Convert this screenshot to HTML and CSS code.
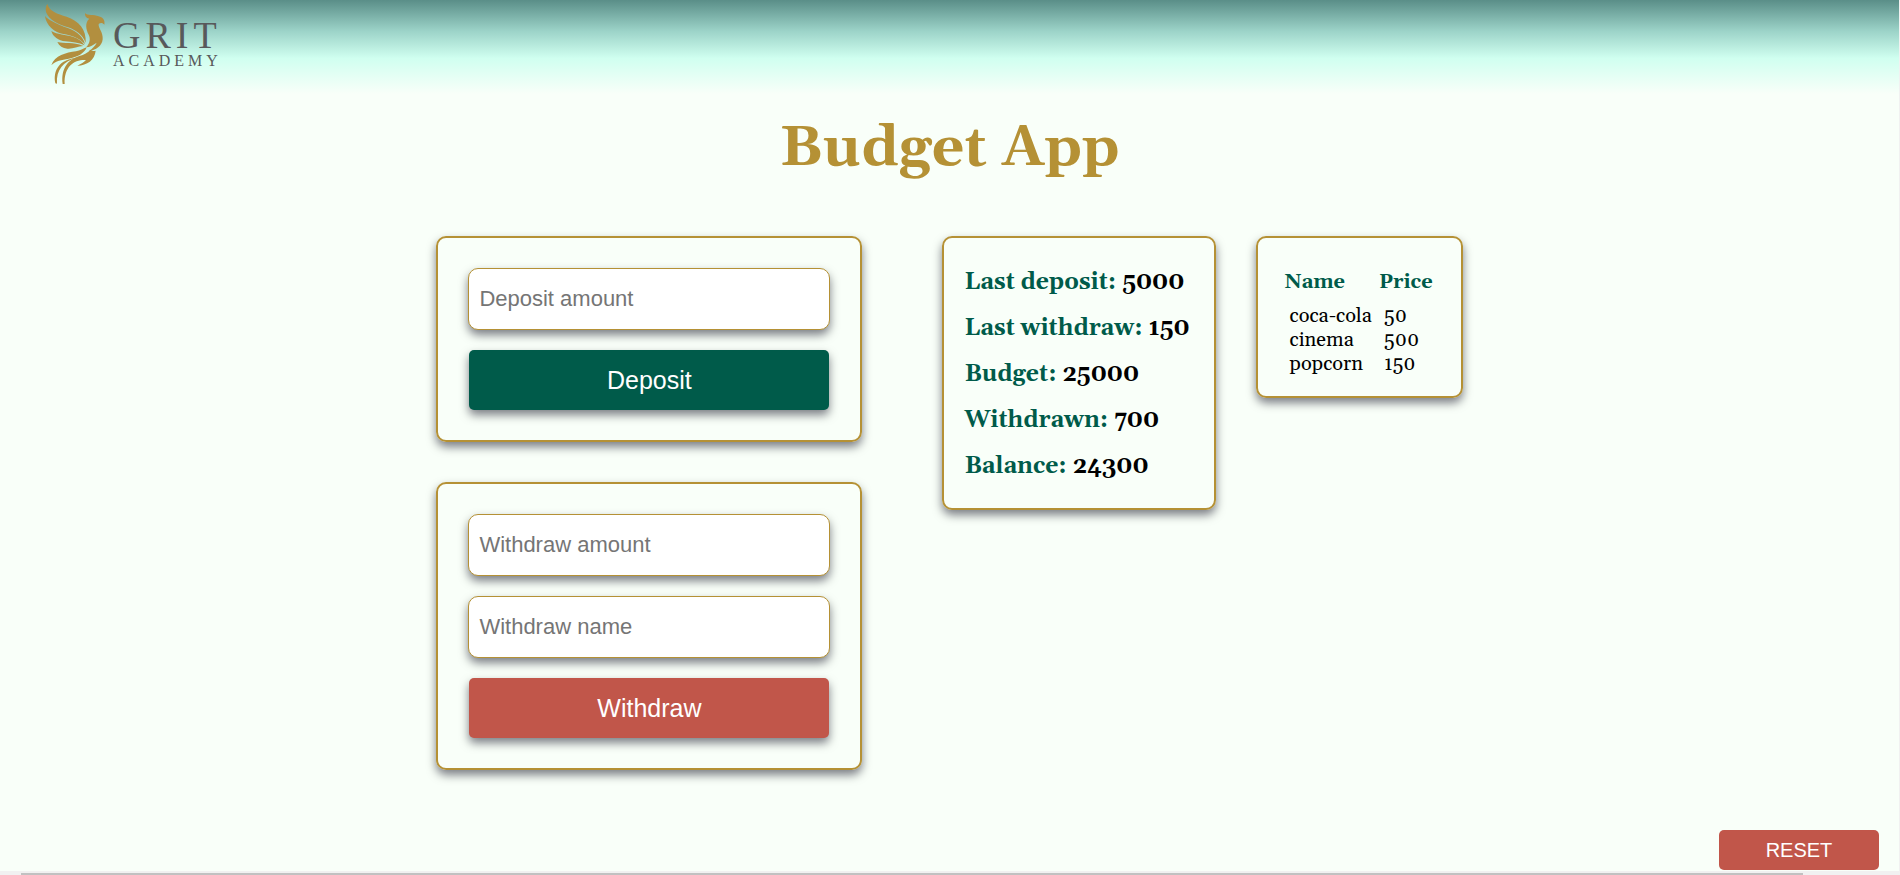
FILE: index.html
```html
<!DOCTYPE html>
<html lang="en">
<head>
<meta charset="utf-8">
<title>Budget App</title>
<link rel="stylesheet" href="styles.css">
</head>
<body>
<header class="topbar">
  <a class="logo" href="#" aria-label="Grit Academy">
    <svg class="logo-bird" viewBox="0 0 210 270" aria-hidden="true">
      <path d="M22 12C28 34 52 42 80 50C116 62 140 88 137 128C128 104 108 90 84 82C58 74 26 60 18 36C16 26 18 18 22 12Z"/>
      <path d="M15 48C28 62 48 70 72 80C104 90 128 104 135 132C114 112 94 106 70 102C44 98 18 76 15 48Z"/>
      <path d="M34 93C52 104 78 104 98 110C116 115 126 124 134 136C116 128 96 126 76 124C56 122 38 110 34 93Z"/>
      <path d="M52 126C74 132 98 124 130 138C112 138 98 148 82 146C68 145 58 138 52 126Z"/>
      <path d="M135 39C142 48 162 42 176 49C188 52 196 60 193 74C188 67 180 68 176 72C174 84 190 96 188 118C186 138 168 150 146 154C158 144 166 138 170 128C158 136 150 142 138 142C150 130 152 116 146 104C138 88 134 68 148 56C138 54 134 48 135 39Z"/>
      <path d="M34 196C44 166 78 158 108 154C120 152 130 146 140 142C134 160 112 172 86 176C64 180 48 182 34 196Z"/>
      <path d="M152 149C156 154 162 154 167 152C164 180 142 196 112 197C124 192 132 186 138 180C104 178 72 198 74 252L68 252C62 204 86 178 118 168C132 164 144 158 152 149Z"/>
      <path d="M108 174C70 184 48 210 51 251L46 250C38 210 60 178 108 174Z"/>
    </svg>
    <span class="logo-text"><span class="logo-name">GRIT</span><span class="logo-sub">ACADEMY</span></span>
  </a>
</header>
<main class="page">
  <h1 class="title">Budget App</h1>
  <div class="board">
    <div class="forms">
      <form class="card form">
        <input class="field" type="text" placeholder="Deposit amount" aria-label="Deposit amount">
        <button class="btn btn-deposit" type="button">Deposit</button>
      </form>
      <form class="card form">
        <input class="field" type="text" placeholder="Withdraw amount" aria-label="Withdraw amount">
        <input class="field" type="text" placeholder="Withdraw name" aria-label="Withdraw name">
        <button class="btn btn-withdraw" type="button">Withdraw</button>
      </form>
    </div>
    <div class="results">
      <section class="card summary">
        <p class="line">Last deposit: <span class="value">5000</span></p>
        <p class="line">Last withdraw: <span class="value">150</span></p>
        <p class="line">Budget: <span class="value">25000</span></p>
        <p class="line">Withdrawn: <span class="value">700</span></p>
        <p class="line">Balance: <span class="value">24300</span></p>
      </section>
      <section class="card history">
        <table class="items">
          <thead><tr><th>Name</th><th>Price</th></tr></thead>
          <tbody>
            <tr><td>coca-cola</td><td>50</td></tr>
            <tr><td>cinema</td><td>500</td></tr>
            <tr><td>popcorn</td><td>150</td></tr>
          </tbody>
        </table>
      </section>
    </div>
  </div>
</main>
<footer class="footer">
  <button class="reset" type="button">RESET</button>
</footer>
<div class="scroll-track"><div class="scroll-thumb"></div></div>
</body>
</html>
```
FILE: styles.css
```css
* { box-sizing: border-box; }

body {
  margin: 0;
  min-height: 100vh;
  display: flex;
  flex-direction: column;
  overflow: hidden;
  border-right: 1px solid #f1f1f1;
  background: #f9fff9;
  color: #000;
  font-family: Georgia, Gelasio, "Liberation Serif", serif;
}

.topbar {
  height: 94px;
  padding: 0 40px;
  background: linear-gradient(#5a8e88, #9cd3c8 33%, #d0fff0 62%, #f9fff9);
}

.logo {
  display: inline-flex;
  color: #58595b;
  text-decoration: none;
}

.logo-bird { width: 70px; height: 90px; fill: #b28f3f; }

.logo-text {
  display: flex;
  flex-direction: column;
  padding-top: 16px;
  margin-left: 3px;
  font-family: "Liberation Serif", serif;
}

.logo-name { font-size: 38px; line-height: 38px; letter-spacing: 5px; }
.logo-sub { font-size: 16px; line-height: 14px; letter-spacing: 4px; }

.page { flex: 1; }

.title {
  margin: 17px 0 51px;
  text-align: center;
  font-size: 57px;
  line-height: 74px;
  color: #b59135;
}

.board {
  display: flex;
  justify-content: center;
  align-items: flex-start;
  gap: 80px;
}

.forms { display: flex; flex-direction: column; gap: 40px; }
.results { display: flex; align-items: flex-start; gap: 40px; }

.card {
  border: 2px solid #b59135;
  border-radius: 10px;
  box-shadow: 0 5px 10px rgba(0, 0, 20, 0.5);
}

.form {
  width: 426px;
  padding: 30px;
  display: flex;
  flex-direction: column;
  gap: 20px;
}

.field {
  height: 62px;
  padding: 0 10px;
  border: 1px solid #b59135;
  border-radius: 10px;
  background: #fff;
  font: 22px "Liberation Sans", Arial, sans-serif;
  box-shadow: 0 5px 10px rgba(0, 0, 20, 0.5);
}

.field::placeholder { color: #757575; }

.btn {
  height: 60px;
  margin: 0 1px;
  border: 0;
  border-radius: 5px;
  color: #fff;
  font: 25px "Liberation Sans", Arial, sans-serif;
  box-shadow: 0 5px 10px rgba(0, 0, 20, 0.5);
}

.btn-deposit { background: #005b4a; }
.btn-withdraw { background: #c1564a; }

.summary { padding: 22px 24px 18px 20px; }

.line {
  margin: 0;
  font-size: 23px;
  line-height: 46px;
  font-weight: bold;
  color: #005b4a;
  white-space: nowrap;
}

.value { color: #000; }

.history { padding: 32px 28px 20px 27px; }

.items { border-collapse: collapse; font-size: 20px; line-height: 24px; }
.items th { padding: 0 0 10px; font-size: 20px; text-align: left; color: #005b4a; }
.items th:first-child { padding-right: 34px; }
.items td { padding: 0 5px; }

.footer { display: flex; justify-content: flex-end; padding: 0 20px 1px; }

.reset {
  width: 160px;
  height: 40px;
  border: 0;
  border-radius: 5px;
  background: #c1564a;
  color: #fff;
  font: 20px "Liberation Sans", Arial, sans-serif;
}

.scroll-track { height: 4px; padding: 2px 96px 0 21px; background: #f1f1f1; }
.scroll-thumb { height: 2px; background: #c1c1c1; }
```
